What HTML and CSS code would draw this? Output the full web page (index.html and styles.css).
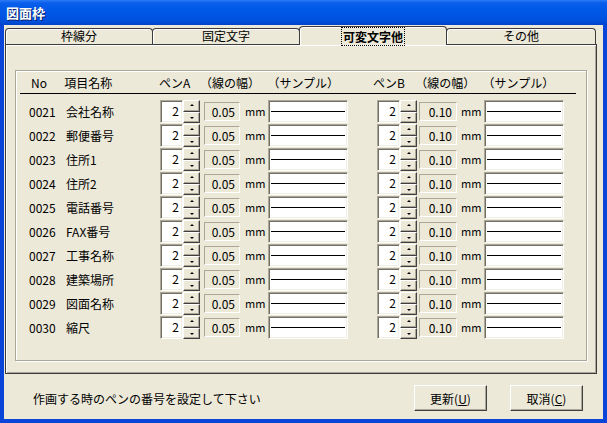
FILE: index.html
```html
<!DOCTYPE html>
<html lang="ja">
<head>
<meta charset="utf-8">
<title>図面枠</title>
<link rel="stylesheet" href="styles.css">
</head>
<body>
<div class="window">
  <div class="titlebar"><span class="title">図面枠</span></div>
  <div class="client">
    <div class="tabs">
      <div class="tab">枠線分</div>
      <div class="tab">固定文字</div>
      <div class="tab active"><span class="focus">可変文字他</span></div>
      <div class="tab last">その他</div>
    </div>
    <div class="panel">
      <div class="group">
        <div class="head">
          <span class="h-no">No</span>
          <span class="h-name">項目名称</span>
          <span class="h-pen">ペンA</span>
          <span class="h-width">（線の幅）</span>
          <span class="h-sample">（サンプル）</span>
          <span class="h-penb">ペンB</span>
          <span class="h-widthb">（線の幅）</span>
          <span class="h-sample">（サンプル）</span>
        </div>
        <div class="rule"></div>
        <div class="rows">
          <div class="row"><span class="c-no">0021</span><span class="c-name">会社名称</span><span class="edit">2</span><span class="spin"><span class="up"></span><span class="down"></span></span><span class="wbox wa">0.05</span><span class="mm">mm</span><span class="sample"></span><span class="edit eb">2</span><span class="spin"><span class="up"></span><span class="down"></span></span><span class="wbox wb">0.10</span><span class="mm">mm</span><span class="sample"></span></div>
          <div class="row"><span class="c-no">0022</span><span class="c-name">郵便番号</span><span class="edit">2</span><span class="spin"><span class="up"></span><span class="down"></span></span><span class="wbox wa">0.05</span><span class="mm">mm</span><span class="sample"></span><span class="edit eb">2</span><span class="spin"><span class="up"></span><span class="down"></span></span><span class="wbox wb">0.10</span><span class="mm">mm</span><span class="sample"></span></div>
          <div class="row"><span class="c-no">0023</span><span class="c-name">住所1</span><span class="edit">2</span><span class="spin"><span class="up"></span><span class="down"></span></span><span class="wbox wa">0.05</span><span class="mm">mm</span><span class="sample"></span><span class="edit eb">2</span><span class="spin"><span class="up"></span><span class="down"></span></span><span class="wbox wb">0.10</span><span class="mm">mm</span><span class="sample"></span></div>
          <div class="row"><span class="c-no">0024</span><span class="c-name">住所2</span><span class="edit">2</span><span class="spin"><span class="up"></span><span class="down"></span></span><span class="wbox wa">0.05</span><span class="mm">mm</span><span class="sample"></span><span class="edit eb">2</span><span class="spin"><span class="up"></span><span class="down"></span></span><span class="wbox wb">0.10</span><span class="mm">mm</span><span class="sample"></span></div>
          <div class="row"><span class="c-no">0025</span><span class="c-name">電話番号</span><span class="edit">2</span><span class="spin"><span class="up"></span><span class="down"></span></span><span class="wbox wa">0.05</span><span class="mm">mm</span><span class="sample"></span><span class="edit eb">2</span><span class="spin"><span class="up"></span><span class="down"></span></span><span class="wbox wb">0.10</span><span class="mm">mm</span><span class="sample"></span></div>
          <div class="row"><span class="c-no">0026</span><span class="c-name">FAX番号</span><span class="edit">2</span><span class="spin"><span class="up"></span><span class="down"></span></span><span class="wbox wa">0.05</span><span class="mm">mm</span><span class="sample"></span><span class="edit eb">2</span><span class="spin"><span class="up"></span><span class="down"></span></span><span class="wbox wb">0.10</span><span class="mm">mm</span><span class="sample"></span></div>
          <div class="row"><span class="c-no">0027</span><span class="c-name">工事名称</span><span class="edit">2</span><span class="spin"><span class="up"></span><span class="down"></span></span><span class="wbox wa">0.05</span><span class="mm">mm</span><span class="sample"></span><span class="edit eb">2</span><span class="spin"><span class="up"></span><span class="down"></span></span><span class="wbox wb">0.10</span><span class="mm">mm</span><span class="sample"></span></div>
          <div class="row"><span class="c-no">0028</span><span class="c-name">建築場所</span><span class="edit">2</span><span class="spin"><span class="up"></span><span class="down"></span></span><span class="wbox wa">0.05</span><span class="mm">mm</span><span class="sample"></span><span class="edit eb">2</span><span class="spin"><span class="up"></span><span class="down"></span></span><span class="wbox wb">0.10</span><span class="mm">mm</span><span class="sample"></span></div>
          <div class="row"><span class="c-no">0029</span><span class="c-name">図面名称</span><span class="edit">2</span><span class="spin"><span class="up"></span><span class="down"></span></span><span class="wbox wa">0.05</span><span class="mm">mm</span><span class="sample"></span><span class="edit eb">2</span><span class="spin"><span class="up"></span><span class="down"></span></span><span class="wbox wb">0.10</span><span class="mm">mm</span><span class="sample"></span></div>
          <div class="row"><span class="c-no">0030</span><span class="c-name">縮尺</span><span class="edit">2</span><span class="spin"><span class="up"></span><span class="down"></span></span><span class="wbox wa">0.05</span><span class="mm">mm</span><span class="sample"></span><span class="edit eb">2</span><span class="spin"><span class="up"></span><span class="down"></span></span><span class="wbox wb">0.10</span><span class="mm">mm</span><span class="sample"></span></div>
        </div>
      </div>
    </div>
    <div class="footer">
      <span class="status">作画する時のペンの番号を設定して下さい</span>
      <button class="btn">更新(<u>U</u>)</button>
      <button class="btn last">取消(<u>C</u>)</button>
    </div>
  </div>
</div>
</body>
</html>
```

FILE: styles.css
```css
html, body {
  margin: 0;
  padding: 0;
}
body {
  width: 607px;
  height: 423px;
  overflow: hidden;
  font-family: "Noto Sans CJK JP", "Liberation Sans", sans-serif;
  font-size: 12px;
  color: #000;
}
.window {
  width: 607px;
  height: 423px;
  box-sizing: border-box;
  background: #0845D8;
  display: flex;
  flex-direction: column;
}
.titlebar {
  height: 25px;
  flex: none;
  background: linear-gradient(#2C7BF5, #0A5EEC 12%, #0058E6 45%, #0050DC 85%, #0042C8);
  display: flex;
  align-items: center;
  padding-left: 6px;
}
.title {
  color: #fff;
  font-weight: bold;
  font-size: 13px;
  text-shadow: 1px 1px 0 #0A1E6A;
}
.client {
  flex: 1;
  margin: 0 4px 4px 4px;
  background: #ECE9D8;
  display: flex;
  flex-direction: column;
}
.tabs {
  display: flex;
  height: 16px;
  margin: 3px 0 0 1px;
  position: relative;
  z-index: 1;
}
.tab {
  width: 148px;
  height: 16px;
  box-sizing: border-box;
  border: 1px solid #3c3c3c;
  border-bottom: none;
  border-radius: 4px 4px 0 0;
  background: #ECE9D8;
  box-shadow: inset 1px 1px 0 #fff;
  text-align: center;
  line-height: 14px;
  margin-right: -1px;
}
.tab.last {
  width: 150px;
}
.tab.active {
  height: 19px;
  margin-top: -2px;
  margin-bottom: -1px;
  font-weight: bold;
  line-height: 18px;
  padding-top: 1px;
  position: relative;
  z-index: 2;
}
.focus {
  outline: 1px dotted #000;
  padding: 0 1px;
}
.panel {
  height: 330px;
  flex: none;
  box-sizing: border-box;
  margin: 0 6px 0 1px;
  border: 1px solid #3c3c3c;
  box-shadow: inset 1px 1px 0 #fff, inset -1px -1px 0 #ACA899;
  padding: 25px 0 0 9px;
}
.group {
  width: 572px;
  height: 291px;
  box-sizing: border-box;
  border: 1px solid #ACA899;
  box-shadow: inset 1px 1px 0 #fff, 1px 1px 0 #fff;
}
.head {
  height: 22px;
  display: flex;
  align-items: center;
  white-space: nowrap;
}
.h-no { margin-left: 15px; width: 34px; }
.h-name { width: 97px; }
.h-pen { width: 35px; }
.h-width { width: 69px; margin-left: 7px; }
.h-sample { width: 106px; }
.h-penb { width: 35px; margin-left: 2px; }
.h-widthb { width: 69px; margin-left: 8px; }
.rule {
  margin-left: 4px;
  width: 556px;
  height: 0;
  border-top: 1px solid #000;
}
.rows {
  margin-top: 6px;
}
.row {
  height: 24px;
  display: flex;
  align-items: flex-start;
  white-space: nowrap;
}
.c-no {
  margin-left: 13px;
  width: 37px;
  line-height: 23px;
}
.c-name {
  width: 94px;
  line-height: 23px;
}
.edit {
  width: 23px;
  height: 23px;
  box-sizing: border-box;
  background: #fff;
  border: 1px solid;
  border-color: #ACA899 #fff #fff #ACA899;
  box-shadow: inset 1px 1px 0 #716F64, inset -1px -1px 0 #F1EFE2;
  text-align: right;
  padding-right: 3px;
  line-height: 20px;
}
.eb { margin-left: 29px; }
.spin {
  width: 17px;
  height: 23px;
  display: flex;
  flex-direction: column;
}
.up, .down {
  flex: 1;
  box-sizing: border-box;
  background: #ECE9D8;
  border: 1px solid;
  border-color: #fff #404040 #404040 #fff;
  box-shadow: inset -1px -1px 0 #ACA899;
  position: relative;
}
.up::after, .down::after {
  content: "";
  position: absolute;
  left: 6px;
  top: 3px;
  border-left: 2px solid transparent;
  border-right: 2px solid transparent;
}
.up::after { border-bottom: 2px solid #000; }
.down::after { border-top: 2px solid #000; top: 4px; }
.wbox {
  height: 19px;
  margin-top: 2px;
  box-sizing: border-box;
  border: 1px solid;
  border-color: #ACA899 #fff #fff #ACA899;
  text-align: right;
  padding-right: 4px;
  line-height: 17px;
}
.wa { width: 36px; margin-left: 4px; }
.wb { width: 38px; margin-left: 2px; }
.mm {
  width: 23px;
  margin-left: 5px;
  line-height: 23px;
  font-size: 11px;
}
.wb + .mm { margin-left: 4px; }
.sample {
  width: 80px;
  height: 23px;
  box-sizing: border-box;
  background: #fff;
  border: 1px solid;
  border-color: #ACA899 #fff #fff #ACA899;
  box-shadow: inset 1px 1px 0 #716F64, inset -1px -1px 0 #F1EFE2;
  display: flex;
  align-items: center;
  padding: 0 2px;
}
.sample::before {
  content: "";
  flex: 1;
  height: 1px;
  background: #000;
}
.footer {
  flex: 1;
  display: flex;
  align-items: center;
  padding-left: 29px;
  padding-top: 3px;
}
.status {
  flex: 1;
}
.btn {
  width: 73px;
  height: 26px;
  margin-right: 23px;
  font-family: inherit;
  font-size: 12px;
  background: #ECE9D8;
  border: 1px solid;
  border-color: #fff #404040 #404040 #fff;
  box-shadow: inset -1px -1px 0 #ACA899;
  padding: 0;
  color: #000;
}
.btn.last {
  margin-right: 20px;
}
```
